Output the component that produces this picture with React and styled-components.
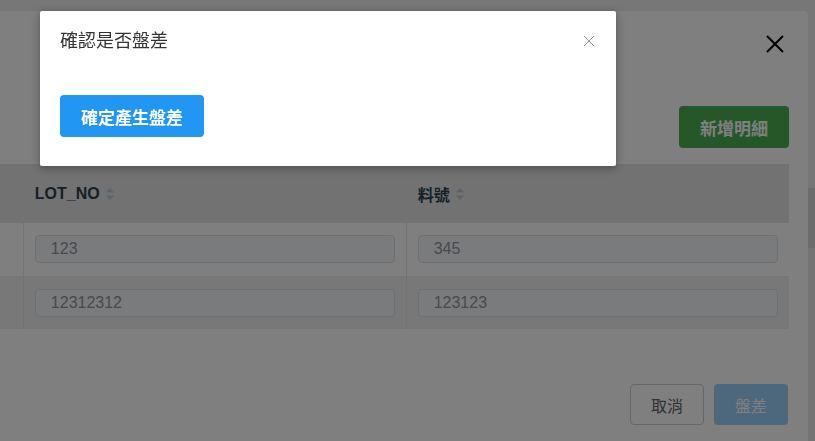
import React from 'react';
import styled, { createGlobalStyle } from 'styled-components';

const GlobalStyle = createGlobalStyle`
  html, body {
    margin: 0;
    padding: 0;
    background: #eeeeee;
    font-family: "Liberation Sans", "Noto Sans CJK TC", sans-serif;
    overflow: hidden;
  }
`;

// 背後的頁面 (只露出右側一條)
const Page = styled.div`
  height: 100vh;
  padding-top: 188px;
  box-sizing: border-box;
  display: flex;
  flex-direction: column;
`;

const PageTableHead = styled.div`
  height: 60px;
  background: #d8d8d8;
`;

const PageTableBody = styled.div`
  flex: 1;
  background: #e8e8e8;
`;

// 底層的盤點明細視窗
const BackModal = styled.div`
  position: fixed;
  top: 11px;
  left: -379px;
  width: 1187px;
  height: 460px;
  background: #ffffff;
  border-radius: 4px;
  padding: 0 19px;
  box-sizing: border-box;
  display: flex;
  flex-direction: column;
`;

const BackHeader = styled.div`
  display: flex;
  justify-content: flex-end;
  padding: 24px 5px 0 0;
  height: 18px;
`;

const Toolbar = styled.div`
  display: flex;
  justify-content: flex-end;
  margin-top: 53px;
`;

const Button = styled.button`
  height: ${p => p.$h || 42}px;
  padding: 0 ${p => p.$px || 20}px;
  border-radius: 4px;
  font-family: inherit;
  font-size: ${p => p.$size || 16}px;
  font-weight: ${p => (p.$bold ? 700 : 400)};
  cursor: pointer;
  border: 1px solid transparent;
  box-sizing: border-box;
  ${p => p.$variant === 'green' && `
    background: #4caf50;
    color: #ffffff;
  `}
  ${p => p.$variant === 'blue' && `
    background: #2196f3;
    color: #ffffff;
  `}
  ${p => p.$variant === 'disabled' && `
    background: #2196f3;
    color: #ffffff;
    opacity: 0.45;
  `}
  ${p => p.$variant === 'plain' && `
    background: #ffffff;
    color: #606266;
    border-color: #cfcfcf;
  `}
`;

const Table = styled.table`
  margin-top: 16px;
  width: 1149px;
  table-layout: fixed;
  border-collapse: collapse;

  th, td {
    border-left: 1px solid #e6e6e6;
    padding: 0 11px;
    text-align: left;
    box-sizing: border-box;
  }

  th {
    height: 59px;
    background: #e4e4e4;
    color: #2c3e50;
    font-size: 16px;
    font-weight: 700;
  }

  td {
    height: 53px;
  }

  tbody tr:nth-child(1) td { background: #ffffff; }
  tbody tr:nth-child(2) td { background: #f1f1f1; }
  tbody tr + tr td { border-top: 1px solid #ececec; }
`;

const HeadLabel = styled.span`
  display: inline-flex;
  align-items: center;
  gap: 6px;
`;

const CellInput = styled.input`
  width: 100%;
  height: 28px;
  box-sizing: border-box;
  border: 1px solid #dcdfe6;
  border-radius: 4px;
  background: #f5f7fa;
  color: #909399;
  font-family: inherit;
  font-size: 16px;
  padding: 0 15px;
  outline: none;
`;

const Footer = styled.div`
  display: flex;
  justify-content: flex-end;
  gap: 10px;
  margin-top: 55px;
  padding-right: 1px;
`;

const Backdrop = styled.div`
  position: fixed;
  inset: 0;
  background: rgba(0, 0, 0, 0.5);
`;

// 上層確認視窗
const ConfirmModal = styled.div`
  position: fixed;
  top: 11px;
  left: 40px;
  width: 576px;
  height: 155px;
  background: #ffffff;
  border-radius: 2px;
  box-shadow: 0 2px 8px rgba(0, 0, 0, 0.35);
  padding: 20px 20px 29px;
  box-sizing: border-box;
  display: flex;
  flex-direction: column;
  align-items: flex-start;
`;

const ConfirmHeader = styled.div`
  align-self: stretch;
  display: flex;
  justify-content: space-between;
  align-items: center;
  height: 20px;
`;

const Title = styled.h3`
  margin: 0;
  font-size: 18px;
  font-weight: 400;
  color: #333333;
  line-height: 20px;
`;

const CloseIcon = styled.svg`
  margin-right: 1px;
  cursor: pointer;
`;

const ConfirmBody = styled.div`
  margin-top: 44px;
`;

const SortCaret = () => (
  <svg width="8" height="12" viewBox="0 0 8 12">
    <path d="M4 0 L8 4.5 L0 4.5 Z" fill="#c0c4cc" />
    <path d="M4 12 L8 7.5 L0 7.5 Z" fill="#c0c4cc" />
  </svg>
);

const rows = [
  { id: 1, lot: '123', part: '345' },
  { id: 2, lot: '12312312', part: '123123' },
];

function App() {
  return (
    <>
      <GlobalStyle />
      <Page>
        <PageTableHead />
        <PageTableBody />
      </Page>

      <BackModal>
        <BackHeader>
          <svg width="18" height="18" viewBox="0 0 18 18">
            <path d="M1 1 L17 17 M17 1 L1 17" stroke="#000" strokeWidth="2" />
          </svg>
        </BackHeader>
        <Toolbar>
          <Button $variant="green" $bold $size={17} $px={20}>新增明細</Button>
        </Toolbar>
        <Table>
          <thead>
            <tr>
              <th></th>
              <th><HeadLabel>LOT_NO <SortCaret /></HeadLabel></th>
              <th><HeadLabel>料號 <SortCaret /></HeadLabel></th>
            </tr>
          </thead>
          <tbody>
            {rows.map(r => (
              <tr key={r.id}>
                <td></td>
                <td><CellInput defaultValue={r.lot} /></td>
                <td><CellInput defaultValue={r.part} /></td>
              </tr>
            ))}
          </tbody>
        </Table>
        <Footer>
          <Button $variant="plain" $h={41} $px={20}>取消</Button>
          <Button $variant="disabled" $h={41} $px={20}>盤差</Button>
        </Footer>
      </BackModal>

      <Backdrop />

      <ConfirmModal>
        <ConfirmHeader>
          <Title>確認是否盤差</Title>
          <CloseIcon width="12" height="12" viewBox="0 0 12 12">
            <path d="M1 1 L11 11 M11 1 L1 11" stroke="#999" strokeWidth="1" />
          </CloseIcon>
        </ConfirmHeader>
        <ConfirmBody>
          <Button $variant="blue" $bold $size={17} $px={20}>確定產生盤差</Button>
        </ConfirmBody>
      </ConfirmModal>
    </>
  );
}

export default App;
